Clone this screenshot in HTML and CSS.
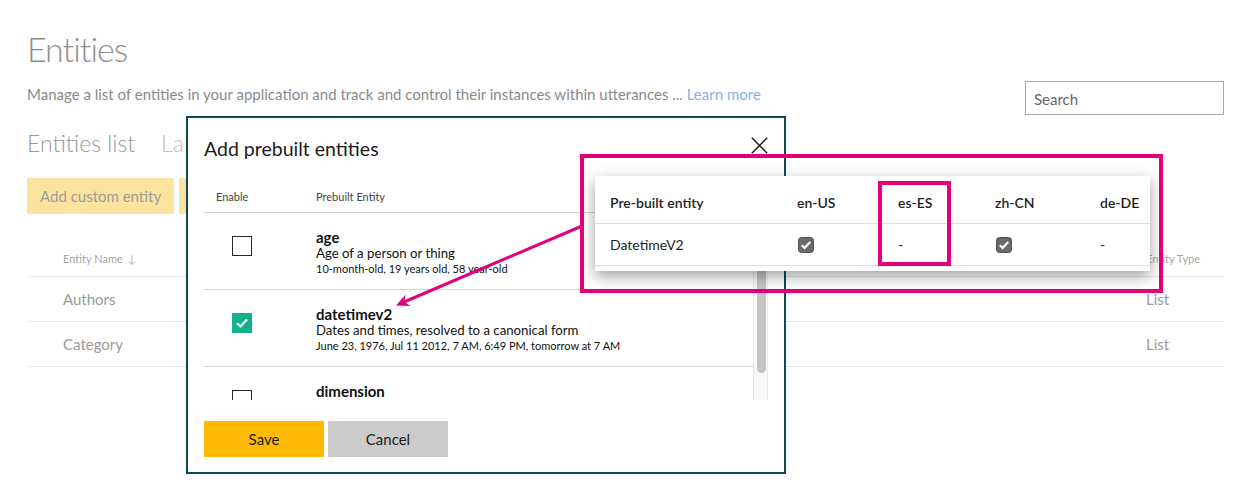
FILE: index.html
```html
<!DOCTYPE html>
<html lang="en">
<head>
<meta charset="utf-8">
<title>Entities</title>
<link rel="stylesheet" href="styles.css">
</head>
<body>
<main class="page">
  <header class="page-head">
    <div class="head-text">
      <h1 class="page-title">Entities</h1>
      <p class="page-desc">Manage a list of entities in your application and track and control their instances within utterances ... <a class="learn-more" href="#">Learn more</a></p>
    </div>
    <div class="search-box">Search</div>
  </header>
  <nav class="tabs">
    <span class="tab">Entities list</span>
    <span class="tab tab-muted">Labels view</span>
  </nav>
  <div class="actions">
    <button class="btn-soft">Add custom entity</button>
    <button class="btn-soft">Add prebuilt entities</button>
  </div>
  <div class="entity-table">
    <div class="et-row et-head">
      <div class="et-name">Entity Name <span class="sort">&#8595;</span></div>
      <div class="et-type">Entity Type</div>
    </div>
    <div class="et-row"><div class="et-name">Authors</div><div class="et-type">List</div></div>
    <div class="et-row"><div class="et-name">Category</div><div class="et-type">List</div></div>
  </div>
</main>

<section class="dialog">
  <div class="dialog-head">
    <h2 class="dialog-title">Add prebuilt entities</h2>
    <svg class="close" width="17" height="17" viewBox="0 0 17 17"><path d="M0.8 0.8L16.2 16.2M16.2 0.8L0.8 16.2" stroke="#1e1e1e" stroke-width="1.5" fill="none"/></svg>
  </div>
  <div class="pe-head"><span class="pe-col-enable">Enable</span><span>Prebuilt Entity</span></div>
  <div class="pe-scroll">
    <div class="pe-list">
      <div class="pe-row">
        <div class="pe-check"><span class="checkbox"></span></div>
        <div class="pe-info">
          <div class="pe-name">age</div>
          <div class="pe-desc">Age of a person or thing</div>
          <div class="pe-ex">10-month-old, 19 years old, 58 year-old</div>
        </div>
      </div>
      <div class="pe-row">
        <div class="pe-check"><span class="checkbox checked"><svg width="20" height="20" viewBox="0 0 20 20"><path d="M5 10.2L8.4 13.4L15 6.6" stroke="#fff" stroke-width="2.2" fill="none"/></svg></span></div>
        <div class="pe-info">
          <div class="pe-name">datetimev2</div>
          <div class="pe-desc">Dates and times, resolved to a canonical form</div>
          <div class="pe-ex">June 23, 1976, Jul 11 2012, 7 AM, 6:49 PM, tomorrow at 7 AM</div>
        </div>
      </div>
      <div class="pe-row">
        <div class="pe-check"><span class="checkbox"></span></div>
        <div class="pe-info">
          <div class="pe-name">dimension</div>
          <div class="pe-desc">Spatial dimensions, including length, distance, area, and volume</div>
          <div class="pe-ex">2 miles, 650 square kilometers, 9,350 feet</div>
        </div>
      </div>
    </div>
    <div class="scrollbar"><div class="thumb"></div></div>
  </div>
  <div class="dialog-actions">
    <button class="btn btn-save">Save</button>
    <button class="btn btn-cancel">Cancel</button>
  </div>
</section>

<div class="callout">
  <div class="card">
    <div class="ct-row ct-head">
      <span>Pre-built entity</span><span>en-US</span><span>es-ES</span><span>zh-CN</span><span>de-DE</span>
    </div>
    <div class="ct-row">
      <span>DatetimeV2</span>
      <span class="ct-cell"><svg class="mini-check" width="16" height="16" viewBox="0 0 16 16"><rect x="0.5" y="0.5" width="15" height="15" rx="3" fill="#6a6a6a" stroke="#525252"/><path d="M3.8 8.2L6.6 11L12.2 4.9" stroke="#fff" stroke-width="2.2" fill="none"/></svg></span>
      <span>-</span>
      <span class="ct-cell"><svg class="mini-check" width="16" height="16" viewBox="0 0 16 16"><rect x="0.5" y="0.5" width="15" height="15" rx="3" fill="#6a6a6a" stroke="#525252"/><path d="M3.8 8.2L6.6 11L12.2 4.9" stroke="#fff" stroke-width="2.2" fill="none"/></svg></span>
      <span>-</span>
    </div>
  </div>
  <div class="callout-mark"></div>
</div>

<svg class="arrow" width="1257" height="492" viewBox="0 0 1257 492">
  <line x1="582" y1="226" x2="404" y2="302" stroke="#e4007c" stroke-width="3"/>
  <polygon points="396,305.5 405.6,294.6 404.3,302 410.8,306.1" fill="#e4007c"/>
</svg>
</body>
</html>
```

FILE: styles.css
```css
* { box-sizing: border-box; }
html, body { margin: 0; }
body {
  font-family: Lato, "Open Sans", "Liberation Sans", sans-serif;
  background: #fff;
  color: #222;
  width: 1257px;
  height: 492px;
  overflow: hidden;
  position: relative;
}

/* background page */
.page { padding: 0 33px 0 27px; }
.page-head { display: flex; justify-content: space-between; align-items: flex-start; }
.page-title {
  margin: 28px 0 0;
  font-size: 34px;
  line-height: 41px;
  font-weight: 300;
  letter-spacing: -1px;
  color: #8e8e8e;
}
.page-desc { margin: 15px 0 0; font-size: 15px; line-height: 20px; color: #8a8a8a; }
.learn-more { color: #86b1e9; text-decoration: none; }
.search-box {
  margin-top: 81px;
  margin-bottom: -11px;
  width: 199px;
  height: 34px;
  border: 1px solid #a8a8a8;
  padding: 2px 8px 0;
  font-size: 15px;
  line-height: 30px;
  color: #666;
}
.tabs { display: flex; gap: 26px; margin-top: 24px; font-size: 23px; line-height: 30px; font-weight: 300; }
.tab { color: #979797; }
.tab-muted { color: #c2c2c2; }
.actions { display: flex; gap: 5px; margin-top: 20px; }
.btn-soft {
  height: 36px;
  padding: 0 13px;
  border: 0;
  background: #fde49e;
  color: #9b9b9b;
  font-family: inherit;
  font-size: 15px;
  line-height: 36px;
}
.entity-table { margin-top: 26px; }
.et-row {
  display: flex;
  align-items: center;
  height: 45px;
  border-bottom: 1px solid #e6e6e6;
  font-size: 15px;
  color: #9b9b9b;
}
.et-row.et-head { height: 37px; font-size: 11px; color: #a6a6a6; }
.et-name { flex: 1; padding-left: 36px; }
.et-type { width: 78px; }
.sort { color: #b8b8b8; margin-left: 2px; }

/* dialog */
.dialog {
  position: absolute;
  left: 186px;
  top: 116px;
  width: 600px;
  border: 2px solid #0e4b4d;
  background: #fff;
  padding: 19px 16px 15px;
}
.dialog-head { display: flex; justify-content: space-between; align-items: flex-start; height: 24px; }
.dialog-title { margin: 0; font-size: 19.5px; line-height: 24px; font-weight: 400; color: #1a1a1a; }
.close { display: block; }
.pe-head {
  display: flex;
  align-items: center;
  margin-top: 19px;
  height: 33px;
  border-bottom: 1px solid #cfcfcf;
  font-size: 11px;
  color: #454545;
}
.pe-col-enable { width: 112px; padding-left: 12px; }
.pe-scroll { display: flex; height: 187px; overflow: hidden; }
.pe-list { flex: 1; min-width: 0; }
.pe-row { display: flex; padding: 15px 0 13px; border-bottom: 1px solid #d4d4d4; }
.pe-check { width: 112px; padding-left: 28px; padding-top: 8px; flex-shrink: 0; }
.checkbox { display: block; width: 20px; height: 20px; border: 1px solid #262626; background: #fff; }
.checkbox.checked { border: 0; background: #13b08e; }
.checkbox svg { display: block; }
.pe-info { color: #111; white-space: nowrap; }
.pe-name { font-size: 15px; line-height: 18px; font-weight: 700; }
.pe-desc { font-size: 13.2px; line-height: 15px; }
.pe-ex { font-size: 11px; line-height: 15px; }
.scrollbar {
  width: 15px;
  flex-shrink: 0;
  background: #f8f8f8;
  border-left: 1px solid #e6e6e6;
  border-right: 1px solid #ececec;
  padding: 6px 0 0 3px;
}
.thumb { width: 9px; height: 154px; border-radius: 5px; background: #c4c4c4; }
.dialog-actions { display: flex; gap: 4px; margin-top: 21px; }
.btn {
  width: 120px;
  height: 36px;
  border: 0;
  font-family: inherit;
  font-size: 15px;
  color: #1a1a1a;
}
.btn-save { background: #ffb900; }
.btn-cancel { background: #cbcbcb; }

/* annotation */
.callout {
  position: absolute;
  left: 580px;
  top: 154px;
  width: 583px;
  height: 139px;
  border: 4px solid #e4007c;
  padding: 18px 9px 0 11px;
}
.card {
  background: #fff;
  box-shadow: 0 5px 14px rgba(0, 0, 0, 0.38);
  padding-bottom: 5px;
}
.ct-row {
  display: grid;
  grid-template-columns: 187px 101px 97px 105px 1fr;
  padding: 12px 0 12px 15px;
  border-bottom: 1px solid #dedede;
  font-size: 14px;
  line-height: 17px;
  color: #1e1e1e;
}
.ct-row.ct-head { padding-top: 18px; font-weight: 600; }
.ct-cell { display: flex; align-items: center; }
.mini-check { display: block; margin-left: 1px; }
.callout-mark {
  position: absolute;
  left: 294px;
  top: 23px;
  width: 73px;
  height: 85px;
  border: 4px solid #e4007c;
}
.arrow { position: absolute; left: 0; top: 0; pointer-events: none; }
```
